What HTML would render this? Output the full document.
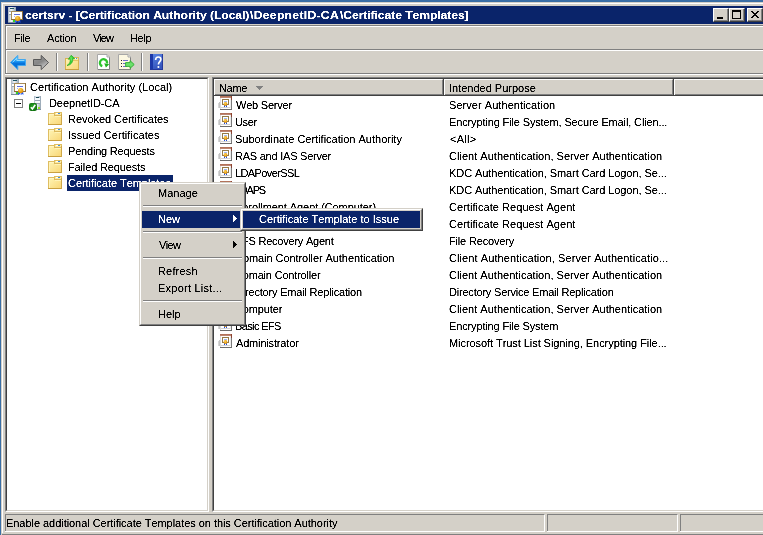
<!DOCTYPE html>
<html><head><meta charset="utf-8"><title>certsrv</title>
<style>
html,body{margin:0;padding:0;}
body{width:763px;height:535px;overflow:hidden;background:#3a6ea5;position:relative;font-family:"Liberation Sans",sans-serif;font-size:11px;color:#000;font-variant-ligatures:none;font-feature-settings:"liga" 0,"clig" 0;font-kerning:none;text-rendering:optimizeSpeed;}
div,span,svg{position:absolute;box-sizing:border-box;}
.t{white-space:nowrap;line-height:13px;height:13px;filter:url(#crisp);}
.face{background:#d4d0c8;}
svg{overflow:visible;}
</style></head>
<body>
<svg width="0" height="0" style="left:0;top:0"><defs>
<filter id="crisp" x="0" y="0" width="1" height="1" color-interpolation-filters="sRGB"><feComponentTransfer><feFuncA type="table" tableValues="0 0 0.45 0.95 1 1"/></feComponentTransfer></filter>
<linearGradient id="gFold" x1="0" y1="0" x2="1" y2="1"><stop offset="0" stop-color="#fef4b4"/><stop offset="1" stop-color="#f9d778"/></linearGradient>
<linearGradient id="gTower" x1="0" y1="0" x2="1" y2="0"><stop offset="0" stop-color="#a9b6c4"/><stop offset="0.4" stop-color="#f1f6f9"/><stop offset="1" stop-color="#93a3b2"/></linearGradient>
<linearGradient id="gBar" x1="0" y1="0" x2="0" y2="1"><stop offset="0" stop-color="#ac6850"/><stop offset="1" stop-color="#c4907c"/></linearGradient>
<radialGradient id="gSeal" cx="0.4" cy="0.35" r="0.7"><stop offset="0" stop-color="#fbd45c"/><stop offset="0.5" stop-color="#eda81c"/><stop offset="1" stop-color="#d88a08"/></radialGradient>
<linearGradient id="gBlueArr" x1="0" y1="0" x2="0" y2="1"><stop offset="0" stop-color="#5cc8ff"/><stop offset="0.45" stop-color="#1a94f2"/><stop offset="0.55" stop-color="#0674dc"/><stop offset="1" stop-color="#0a6cd0"/></linearGradient>
<linearGradient id="gGrayArr" x1="0" y1="0" x2="0.6" y2="1"><stop offset="0" stop-color="#9a9a9a"/><stop offset="0.55" stop-color="#868686"/><stop offset="1" stop-color="#d0d0d0"/></linearGradient>
<linearGradient id="gHelp" x1="0" y1="0" x2="0.4" y2="1"><stop offset="0" stop-color="#5a86e4"/><stop offset="1" stop-color="#3454bc"/></linearGradient>
<radialGradient id="gBadge" cx="0.5" cy="0.45" r="0.6"><stop offset="0" stop-color="#2cab2c"/><stop offset="1" stop-color="#0c6c0c"/></radialGradient>

<g id="folder" shape-rendering="crispEdges">
 <rect x="1" y="2" width="14" height="12" fill="#dfbe62"/>
 <rect x="7" y="1" width="8" height="4" fill="#dfbe62"/>
 <rect x="2" y="3" width="12" height="10" fill="url(#gFold)"/>
 <rect x="2" y="3" width="5" height="1" fill="#fff6c4"/>
 <rect x="2" y="3" width="1" height="10" fill="#fff3b8"/>
 <rect x="7" y="3" width="1" height="2" fill="#dcb85c"/>
 <rect x="7" y="4" width="7" height="1" fill="#dcb85c"/>
 <rect x="8" y="2" width="6" height="2" fill="#fbeaa4"/>
 <rect x="9" y="2" width="2" height="1" fill="#ffffff"/>
 <rect x="11" y="2" width="2" height="1" fill="#3c8ce4"/>
 <rect x="8" y="5" width="6" height="1" fill="#fff3b8"/>
 <rect x="1" y="13" width="14" height="1" fill="#c9a040"/>
 <rect x="14" y="3" width="1" height="11" fill="#cfa848"/>
</g>

<g id="tplicon">
 <g shape-rendering="crispEdges">
 <rect x="2" y="8" width="2" height="5" fill="#d6d6d6"/>
 <rect x="3" y="7" width="1" height="6" fill="#c4c4c4"/>
 <rect x="4" y="1" width="12" height="2" fill="url(#gBar)"/>
 <rect x="15" y="1" width="1" height="4" fill="#8c4432"/>
 <rect x="4" y="3" width="11" height="11" fill="#ffffff"/>
 <rect x="4" y="3" width="1" height="11" fill="#dcdcdc"/>
 <rect x="15" y="5" width="1" height="10" fill="#7a7a7a"/>
 <rect x="4" y="14" width="12" height="1" fill="#6c6c6c"/>
 <rect x="5" y="12" width="10" height="1" fill="#d2d2d2"/>
 <rect x="14" y="3" width="1" height="10" fill="#ececec"/>
 <rect x="6" y="4" width="7" height="6" fill="#947a48"/>
 <rect x="7" y="5" width="5" height="4" fill="#ffffff"/>
 <rect x="8" y="6" width="3" height="1" fill="#9cb8f6"/>
 <rect x="8" y="10" width="1" height="2" fill="#1c4cdc"/>
 <rect x="10" y="10" width="1" height="2" fill="#1c4cdc"/>
 </g>
 <circle cx="9.5" cy="9" r="1.9" fill="url(#gSeal)"/>
</g>

<g id="caicon">
 <g shape-rendering="crispEdges">
 <rect x="1" y="0" width="8" height="16" fill="url(#gTower)"/>
 <rect x="1" y="15" width="8" height="1" fill="#7c8c9c"/>
 <rect x="3" y="1" width="4" height="1" fill="#1c5464"/>
 <rect x="2" y="4" width="6" height="1" fill="#9aa8b6"/>
 <rect x="2" y="5" width="3" height="2" fill="#ffffff"/>
 <rect x="2" y="7" width="6" height="1" fill="#9aa8b6"/>
 <rect x="6" y="13" width="2" height="2" fill="#34d424"/>
 <rect x="4" y="4" width="12" height="9" fill="#8c6c38"/>
 <rect x="4" y="4" width="11" height="1" fill="#a88c58"/>
 <rect x="4" y="4" width="1" height="8" fill="#a88c58"/>
 <rect x="5" y="5" width="10" height="7" fill="#ffffff"/>
 <rect x="7" y="7" width="6" height="1" fill="#5c6cdc"/>
 <rect x="7" y="9" width="1" height="1" fill="#a4b0ec"/>
 </g>
 <path d="M8.3 12.5 L8 16 L9.2 15.1 L10.3 16 L10.3 12.5Z" fill="#2458f4"/>
 <path d="M11.2 12.5 L11.2 16 L12.3 15.1 L13.5 16 L13.1 12.5Z" fill="#2458f4"/>
 <circle cx="10.7" cy="11.6" r="2.7" fill="url(#gSeal)"/>
</g>

<g id="srvicon">
 <g shape-rendering="crispEdges">
 <rect x="6" y="1" width="7" height="14" fill="url(#gTower)"/>
 <rect x="6" y="14" width="7" height="1" fill="#8090a0"/>
 <rect x="8" y="2" width="3" height="1" fill="#1c4858"/>
 <rect x="7" y="3" width="5" height="2" fill="#f6fafc"/>
 <rect x="7" y="5" width="5" height="1" fill="#98a6b4"/>
 <rect x="7" y="6" width="5" height="2" fill="#f6fafc"/>
 <rect x="7" y="8" width="5" height="1" fill="#98a6b4"/>
 <rect x="10" y="12" width="2" height="2" fill="#8cdc24"/>
 </g>
 <rect x="1" y="8" width="8" height="8" rx="2.2" fill="url(#gBadge)"/>
 <path d="M2.8 12.2 L4.4 14 L7.3 9.8" fill="none" stroke="#fff" stroke-width="1.5"/>
</g>
</defs></svg>

<div style="left:1px;top:2px;width:770px;height:533px;background:#d4d0c8;"></div>
<div style="left:2px;top:3px;width:770px;height:1px;background:#fff;"></div>
<div style="left:2px;top:3px;width:1px;height:530px;background:#fff;"></div>
<div style="left:2px;top:534px;width:770px;height:1px;background:#808080;"></div>
<div style="left:5px;top:6px;width:758px;height:18px;background:#0a246a;"></div>
<span class="t" style="left:25px;top:9px;letter-spacing:-0.073px;color:#fff;font-weight:bold;transform-origin:0 0;transform:scaleX(1.109);">certsrv - [Certification Authority (Local)</span>
<span class="t" style="left:250px;top:9px;letter-spacing:0.250px;color:#fff;font-weight:bold;transform-origin:0 0;transform:scaleX(1.109);">\DeepnetID-CA</span>
<span class="t" style="left:340px;top:9px;letter-spacing:-0.091px;color:#fff;font-weight:bold;transform-origin:0 0;transform:scaleX(1.109);">\Certificate Templates]</span>
<svg id="ticon" style="left:7px;top:7px" width="16" height="16" viewBox="0 0 16 16"><use href="#caicon"/></svg>
<div style="left:713px;top:8px;width:16px;height:14px;background:#d4d0c8;border-top:1px solid #fff;border-left:1px solid #fff;border-right:1px solid #404040;border-bottom:1px solid #404040;"><div style="left:0;top:0;width:14px;height:12px;border-right:1px solid #808080;border-bottom:1px solid #808080;"></div><div style="left:3px;top:8px;width:6px;height:2px;background:#000"></div></div>
<div style="left:729px;top:8px;width:16px;height:14px;background:#d4d0c8;border-top:1px solid #fff;border-left:1px solid #fff;border-right:1px solid #404040;border-bottom:1px solid #404040;"><div style="left:0;top:0;width:14px;height:12px;border-right:1px solid #808080;border-bottom:1px solid #808080;"></div><div style="left:2px;top:1px;width:9px;height:9px;border:1px solid #000;border-top-width:2px;"></div></div>
<div style="left:747px;top:8px;width:16px;height:14px;background:#d4d0c8;border-top:1px solid #fff;border-left:1px solid #fff;border-right:1px solid #404040;border-bottom:1px solid #404040;"><div style="left:0;top:0;width:14px;height:12px;border-right:1px solid #808080;border-bottom:1px solid #808080;"></div><svg style="left:3px;top:2px" width="8" height="7" viewBox="0 0 8 7" shape-rendering="crispEdges"><path d="M0 0h2v1h-2zM6 0h2v1h-2zM1 1h2v1h-2zM5 1h2v1h-2zM2 2h4v1h-4zM3 3h2v1h-2zM2 4h4v1h-4zM1 5h2v1h-2zM5 5h2v1h-2zM0 6h2v1h-2zM6 6h2v1h-2z" fill="#000"/></svg></div>
<div style="left:5px;top:25px;width:760px;height:1px;background:#808080;"></div>
<div style="left:5px;top:26px;width:760px;height:1px;background:#fff;"></div>
<div style="left:5px;top:25px;width:1px;height:50px;background:#808080;"></div>
<div style="left:6px;top:26px;width:1px;height:48px;background:#fff;"></div>
<div style="left:5px;top:49px;width:760px;height:1px;background:#808080;"></div>
<div style="left:6px;top:50px;width:760px;height:1px;background:#fff;"></div>
<div style="left:5px;top:73px;width:760px;height:1px;background:#808080;"></div>
<div style="left:5px;top:74px;width:760px;height:1px;background:#fff;"></div>
<span class="t" style="left:14px;top:32px;letter-spacing:-0.333px;">File</span>
<span class="t" style="left:47px;top:32px;letter-spacing:-0.200px;">Action</span>
<span class="t" style="left:93px;top:32px;letter-spacing:-1.000px;">View</span>
<span class="t" style="left:130px;top:32px;letter-spacing:-0.333px;">Help</span>
<div style="left:56px;top:53px;width:1px;height:18px;background:#808080;"></div>
<div style="left:57px;top:53px;width:1px;height:18px;background:#fff;"></div>
<div style="left:87px;top:53px;width:1px;height:18px;background:#808080;"></div>
<div style="left:88px;top:53px;width:1px;height:18px;background:#fff;"></div>
<div style="left:141px;top:53px;width:1px;height:18px;background:#808080;"></div>
<div style="left:142px;top:53px;width:1px;height:18px;background:#fff;"></div>
<svg style="left:10px;top:54px" width="16" height="16" viewBox="0 0 16 16"><path d="M0.5 8.5 L7.8 1.4 L7.8 5.5 L15.5 5.5 L15.5 11.5 L7.8 11.5 L7.8 15.6 Z" fill="url(#gBlueArr)" stroke="#44a8ee" stroke-width="1" stroke-linejoin="round"/><path d="M2.6 8.3 L6.8 4.2 L6.8 6.5 L14.4 6.5" fill="none" stroke="#a0e4ff" stroke-width="1" opacity="0.85"/></svg>
<svg style="left:33px;top:54px" width="16" height="16" viewBox="0 0 16 16"><path d="M15.5 8.5 L8.2 1.4 L8.2 5.5 L0.5 5.5 L0.5 11.5 L8.2 11.5 L8.2 15.6 Z" fill="url(#gGrayArr)" stroke="#585858" stroke-width="1" stroke-linejoin="round"/></svg>
<svg style="left:64px;top:54px" width="16" height="16" viewBox="0 0 16 16">
 <g shape-rendering="crispEdges">
 <rect x="1" y="4" width="14" height="12" fill="#d8b250"/>
 <rect x="9" y="3" width="6" height="3" fill="#dcb85c"/>
 <rect x="2" y="5" width="12" height="10" fill="url(#gFold)"/>
 <rect x="9" y="6" width="5" height="1" fill="#e6c468"/>
 <rect x="10" y="4" width="4" height="2" fill="#fbeaa4"/>
 <rect x="10" y="4" width="2" height="1" fill="#fff"/>
 <rect x="12" y="4" width="1" height="1" fill="#3c8ce4"/>
 <rect x="1" y="15" width="14" height="1" fill="#c9a040"/>
 </g>
 <path d="M3 11.5 C5.4 10.2 6.6 8 6.2 5 L4.3 5.3 L7.2 1.3 L10.8 4.6 L8.7 4.9 C9 8.4 6.8 11 3 11.5Z" fill="#3cd43c" stroke="#22a822" stroke-width="0.7"/><path d="M6.9 2.8 L7.4 6.5" stroke="#7cf07c" stroke-width="0.9" fill="none"/>
</svg>
<svg style="left:95px;top:54px" width="16" height="16" viewBox="0 0 16 16">
 <path d="M2.5 0.5 L12 0.5 L14.5 3 L14.5 15.5 L2.5 15.5Z" fill="#fff" stroke="#a8a8a8" stroke-width="1"/>
 <path d="M3 15.5 L14.5 15.5 L14.5 3.5" fill="none" stroke="#808080" stroke-width="1"/>
 <path d="M12 0.5 L12 3 L14.5 3" fill="#e8e8e8" stroke="#a8a8a8" stroke-width="1"/>
 <path d="M7.3 12.2 A3.6 3.6 0 1 1 12 9.6" fill="none" stroke="#2cc42c" stroke-width="2.3"/>
 <path d="M9.2 9.2 L14.3 10.2 L10.9 13.4Z" fill="#1eb41e"/>
</svg>
<svg style="left:118px;top:54px" width="16" height="16" viewBox="0 0 16 16">
 <path d="M0.5 0.5 L10 0.5 L12.5 3 L12.5 15.5 L0.5 15.5Z" fill="#fdf8e2" stroke="#a8a8a8" stroke-width="1"/>
 <path d="M1 15.5 L12.5 15.5 L12.5 3.5" fill="none" stroke="#808080" stroke-width="1"/>
 <path d="M10 0.5 L10 3 L12.5 3" fill="#f0f0f0" stroke="#a8a8a8" stroke-width="1"/>
 <g shape-rendering="crispEdges">
 <rect x="3" y="6" width="1" height="1" fill="#202020"/><rect x="3" y="9" width="1" height="1" fill="#202020"/><rect x="3" y="12" width="1" height="1" fill="#202020"/>
 <rect x="5" y="6" width="5" height="1" fill="#6c6ccc"/><rect x="5" y="9" width="4" height="1" fill="#6c6ccc"/><rect x="5" y="12" width="4" height="1" fill="#6c6ccc"/>
 </g>
 <path d="M7.6 8.6 L12 8.6 L12 6.6 L16.2 10.5 L12 14.4 L12 12.4 L7.6 12.4Z" fill="#6ce06c" stroke="#2cac2c" stroke-width="0.9"/>
</svg>
<svg style="left:150px;top:54px" width="13" height="16" viewBox="0 0 13 16">
 <rect x="0" y="0" width="13" height="16" fill="url(#gHelp)" shape-rendering="crispEdges"/>
 <rect x="0" y="0" width="3" height="16" fill="#1c38a8" shape-rendering="crispEdges"/>
 <rect x="12" y="0" width="1" height="16" fill="#24389c" shape-rendering="crispEdges"/>
 <rect x="0" y="15" width="13" height="1" fill="#24389c" shape-rendering="crispEdges"/>
 <path d="M5.6 6 C5.6 3.6 7 3 8.3 3 C9.8 3 10.9 3.9 10.9 5.3 C10.9 7.6 8.4 7.6 8.4 10.4" fill="none" stroke="#fff" stroke-width="1.6"/>
 <circle cx="8.4" cy="13" r="1.05" fill="#fff"/>
</svg>

<div style="left:5px;top:77px;width:204px;height:435px;background:#fff;border-top:1px solid #808080;border-left:1px solid #808080;border-right:1px solid #fff;border-bottom:1px solid #fff;"></div>
<div style="left:6px;top:78px;width:202px;height:433px;background:#fff;border-top:1px solid #404040;border-left:1px solid #404040;border-right:1px solid #d4d0c8;border-bottom:1px solid #d4d0c8;"></div>
<div style="left:212px;top:77px;width:560px;height:435px;background:#fff;border-top:1px solid #808080;border-left:1px solid #808080;border-bottom:1px solid #fff;"></div>
<div style="left:213px;top:78px;width:560px;height:433px;background:#fff;border-top:1px solid #404040;border-left:1px solid #404040;border-bottom:1px solid #d4d0c8;"></div>
<div style="left:214px;top:79px;width:230px;height:17px;background:#d4d0c8;"></div><div style="left:214px;top:79px;width:228px;height:1px;background:#fff;"></div><div style="left:214px;top:79px;width:1px;height:16px;background:#fff;"></div><div style="left:442px;top:80px;width:1px;height:15px;background:#808080;"></div><div style="left:215px;top:94px;width:228px;height:1px;background:#808080;"></div><div style="left:443px;top:79px;width:1px;height:17px;background:#404040;"></div><div style="left:214px;top:95px;width:230px;height:1px;background:#404040;"></div>
<div style="left:444px;top:79px;width:230px;height:17px;background:#d4d0c8;"></div><div style="left:444px;top:79px;width:228px;height:1px;background:#fff;"></div><div style="left:444px;top:79px;width:1px;height:16px;background:#fff;"></div><div style="left:672px;top:80px;width:1px;height:15px;background:#808080;"></div><div style="left:445px;top:94px;width:228px;height:1px;background:#808080;"></div><div style="left:673px;top:79px;width:1px;height:17px;background:#404040;"></div><div style="left:444px;top:95px;width:230px;height:1px;background:#404040;"></div>
<div style="left:674px;top:79px;width:100px;height:17px;background:#d4d0c8;"></div><div style="left:674px;top:79px;width:98px;height:1px;background:#fff;"></div><div style="left:674px;top:79px;width:1px;height:16px;background:#fff;"></div><div style="left:772px;top:80px;width:1px;height:15px;background:#808080;"></div><div style="left:675px;top:94px;width:98px;height:1px;background:#808080;"></div><div style="left:773px;top:79px;width:1px;height:17px;background:#404040;"></div><div style="left:674px;top:95px;width:100px;height:1px;background:#404040;"></div>
<span class="t" style="left:219px;top:82px;letter-spacing:-0.333px;">Name</span>
<span class="t" style="left:449px;top:82px;">Intended Purpose</span>
<svg style="left:256px;top:86px" width="7" height="4" viewBox="0 0 7 4" shape-rendering="crispEdges"><path d="M0 0h7v1h-7zM1 1h5v1h-5zM2 2h3v1h-3zM3 3h1v1h-1z" fill="#808080"/></svg>
<svg style="left:216px;top:95px" width="16" height="16" viewBox="0 0 16 16"><use href="#tplicon"/></svg>
<span class="t" style="left:236px;top:99px;letter-spacing:-0.222px;">Web Server</span>
<span class="t" style="left:449px;top:99px;letter-spacing:0.050px;">Server Authentication</span>
<svg style="left:216px;top:112px" width="16" height="16" viewBox="0 0 16 16"><use href="#tplicon"/></svg>
<span class="t" style="left:235px;top:116px;letter-spacing:-0.333px;">User</span>
<span class="t" style="left:449px;top:116px;letter-spacing:-0.133px;">Encrypting File System, Secure Email, Clien...</span>
<svg style="left:216px;top:129px" width="16" height="16" viewBox="0 0 16 16"><use href="#tplicon"/></svg>
<span class="t" style="left:235px;top:133px;">Subordinate Certification Authority</span>
<span class="t" style="left:450px;top:133px;letter-spacing:0.250px;">&lt;All&gt;</span>
<svg style="left:216px;top:146px" width="16" height="16" viewBox="0 0 16 16"><use href="#tplicon"/></svg>
<span class="t" style="left:235px;top:150px;letter-spacing:-0.235px;">RAS and IAS Server</span>
<span class="t" style="left:449px;top:150px;letter-spacing:0.023px;">Client Authentication, Server Authentication</span>
<svg style="left:216px;top:163px" width="16" height="16" viewBox="0 0 16 16"><use href="#tplicon"/></svg>
<span class="t" style="left:235px;top:167px;letter-spacing:-0.600px;">LDAPoverSSL</span>
<span class="t" style="left:449px;top:167px;letter-spacing:-0.071px;">KDC Authentication, Smart Card Logon, Se...</span>
<svg style="left:216px;top:180px" width="16" height="16" viewBox="0 0 16 16"><use href="#tplicon"/></svg>
<span class="t" style="left:235px;top:184px;letter-spacing:-1.250px;">LDAPS</span>
<span class="t" style="left:449px;top:184px;letter-spacing:-0.071px;">KDC Authentication, Smart Card Logon, Se...</span>
<svg style="left:216px;top:197px" width="16" height="16" viewBox="0 0 16 16"><use href="#tplicon"/></svg>
<span class="t" style="left:235px;top:201px;letter-spacing:-0.077px;">Enrollment Agent (Computer)</span>
<span class="t" style="left:449px;top:201px;letter-spacing:0.042px;">Certificate Request Agent</span>
<svg style="left:216px;top:214px" width="16" height="16" viewBox="0 0 16 16"><use href="#tplicon"/></svg>
<span class="t" style="left:235px;top:218px;">Enrollment Agent</span>
<span class="t" style="left:449px;top:218px;letter-spacing:0.042px;">Certificate Request Agent</span>
<svg style="left:216px;top:231px" width="16" height="16" viewBox="0 0 16 16"><use href="#tplicon"/></svg>
<span class="t" style="left:235px;top:235px;letter-spacing:-0.235px;">EFS Recovery Agent</span>
<span class="t" style="left:449px;top:235px;letter-spacing:-0.167px;">File Recovery</span>
<svg style="left:216px;top:248px" width="16" height="16" viewBox="0 0 16 16"><use href="#tplicon"/></svg>
<span class="t" style="left:235px;top:252px;letter-spacing:-0.065px;">Domain Controller Authentication</span>
<span class="t" style="left:449px;top:252px;letter-spacing:0.089px;">Client Authentication, Server Authenticatio...</span>
<svg style="left:216px;top:265px" width="16" height="16" viewBox="0 0 16 16"><use href="#tplicon"/></svg>
<span class="t" style="left:235px;top:269px;letter-spacing:-0.188px;">Domain Controller</span>
<span class="t" style="left:449px;top:269px;letter-spacing:0.023px;">Client Authentication, Server Authentication</span>
<svg style="left:216px;top:282px" width="16" height="16" viewBox="0 0 16 16"><use href="#tplicon"/></svg>
<span class="t" style="left:235px;top:286px;letter-spacing:-0.192px;">Directory Email Replication</span>
<span class="t" style="left:449px;top:286px;letter-spacing:-0.206px;">Directory Service Email Replication</span>
<svg style="left:216px;top:299px" width="16" height="16" viewBox="0 0 16 16"><use href="#tplicon"/></svg>
<span class="t" style="left:235px;top:303px;letter-spacing:-0.143px;">Computer</span>
<span class="t" style="left:449px;top:303px;letter-spacing:0.023px;">Client Authentication, Server Authentication</span>
<svg style="left:216px;top:316px" width="16" height="16" viewBox="0 0 16 16"><use href="#tplicon"/></svg>
<span class="t" style="left:235px;top:320px;letter-spacing:-0.625px;">Basic EFS</span>
<span class="t" style="left:449px;top:320px;letter-spacing:-0.143px;">Encrypting File System</span>
<svg style="left:216px;top:333px" width="16" height="16" viewBox="0 0 16 16"><use href="#tplicon"/></svg>
<span class="t" style="left:236px;top:337px;letter-spacing:-0.167px;">Administrator</span>
<span class="t" style="left:449px;top:337px;letter-spacing:-0.064px;">Microsoft Trust List Signing, Encrypting File...</span>
<span class="t" style="left:30px;top:81px;letter-spacing:0.033px;">Certification Authority (Local)</span>
<span class="t" style="left:49px;top:97px;letter-spacing:-0.091px;">DeepnetID-CA</span>
<span class="t" style="left:68px;top:113px;letter-spacing:-0.053px;">Revoked Certificates</span>
<svg style="left:47px;top:111px" width="16" height="16" viewBox="0 0 16 16"><use href="#folder"/></svg>
<span class="t" style="left:68px;top:129px;letter-spacing:0.056px;">Issued Certificates</span>
<svg style="left:47px;top:127px" width="16" height="16" viewBox="0 0 16 16"><use href="#folder"/></svg>
<span class="t" style="left:68px;top:145px;letter-spacing:-0.200px;">Pending Requests</span>
<svg style="left:47px;top:143px" width="16" height="16" viewBox="0 0 16 16"><use href="#folder"/></svg>
<span class="t" style="left:68px;top:161px;letter-spacing:-0.143px;">Failed Requests</span>
<svg style="left:47px;top:159px" width="16" height="16" viewBox="0 0 16 16"><use href="#folder"/></svg>
<div style="left:67px;top:175px;width:106px;height:16px;background:#0a246a;"></div>
<span class="t" style="left:68px;top:177px;letter-spacing:-0.050px;color:#fff;">Certificate Templates</span>
<svg style="left:47px;top:175px" width="16" height="16" viewBox="0 0 16 16"><use href="#folder"/></svg>
<svg style="left:10px;top:79px" width="16" height="16" viewBox="0 0 16 16"><use href="#caicon"/></svg>
<svg style="left:28px;top:95px" width="16" height="16" viewBox="0 0 16 16"><use href="#srvicon"/></svg>
<div style="left:14px;top:99px;width:9px;height:9px;background:#fff;border:1px solid #808080;"></div>
<div style="left:16px;top:103px;width:5px;height:1px;background:#000;"></div>
<div style="left:5px;top:514px;width:540px;height:18px;background:#d4d0c8;border-top:1px solid #808080;border-right:1px solid #fff;border-bottom:1px solid #fff;"></div><div style="left:5px;top:514px;width:1px;height:17px;background:#808080;"></div>
<div style="left:547px;top:514px;width:131px;height:18px;background:#d4d0c8;border-top:1px solid #808080;border-right:1px solid #fff;border-bottom:1px solid #fff;"></div><div style="left:547px;top:514px;width:1px;height:17px;background:#808080;"></div>
<div style="left:680px;top:514px;width:100px;height:18px;background:#d4d0c8;border-top:1px solid #808080;border-right:1px solid #fff;border-bottom:1px solid #fff;"></div><div style="left:680px;top:514px;width:1px;height:17px;background:#808080;"></div>
<span class="t" style="left:6px;top:517px;letter-spacing:-0.043px;">Enable additional Certificate Templates on this Certification Authority</span>
<div style="left:139px;top:182px;width:107px;height:144px;background:#d4d0c8;border-top:1px solid #d4d0c8;border-left:1px solid #d4d0c8;border-right:1px solid #404040;border-bottom:1px solid #404040;"><div style="left:0;top:0;width:105px;height:142px;border-top:1px solid #fff;border-left:1px solid #fff;border-right:1px solid #808080;border-bottom:1px solid #808080;"></div></div>
<div style="left:143px;top:205px;width:99px;height:1px;background:#808080;"></div>
<div style="left:143px;top:206px;width:99px;height:1px;background:#fff;"></div>
<div style="left:143px;top:231px;width:99px;height:1px;background:#808080;"></div>
<div style="left:143px;top:232px;width:99px;height:1px;background:#fff;"></div>
<div style="left:143px;top:257px;width:99px;height:1px;background:#808080;"></div>
<div style="left:143px;top:258px;width:99px;height:1px;background:#fff;"></div>
<div style="left:143px;top:300px;width:99px;height:1px;background:#808080;"></div>
<div style="left:143px;top:301px;width:99px;height:1px;background:#fff;"></div>
<div style="left:142px;top:211px;width:101px;height:17px;background:#0a246a;"></div>
<span class="t" style="left:158px;top:187px;color:#000;">Manage</span>
<span class="t" style="left:158px;top:213px;color:#fff;">New</span>
<span class="t" style="left:159px;top:239px;letter-spacing:-0.667px;color:#000;">View</span>
<span class="t" style="left:158px;top:265px;letter-spacing:0.167px;color:#000;">Refresh</span>
<span class="t" style="left:158px;top:282px;letter-spacing:0.231px;color:#000;">Export List...</span>
<span class="t" style="left:158px;top:308px;color:#000;">Help</span>
<svg style="left:233px;top:215px" width="4" height="7" viewBox="0 0 4 7" shape-rendering="crispEdges"><path d="M0 0h1v7h-1zM1 1h1v5h-1zM2 2h1v3h-1zM3 3h1v1h-1z" fill="#fff"/></svg>
<svg style="left:233px;top:241px" width="4" height="7" viewBox="0 0 4 7" shape-rendering="crispEdges"><path d="M0 0h1v7h-1zM1 1h1v5h-1zM2 2h1v3h-1zM3 3h1v1h-1z" fill="#000"/></svg>
<div style="left:240px;top:208px;width:183px;height:23px;background:#d4d0c8;border-top:1px solid #d4d0c8;border-left:1px solid #d4d0c8;border-right:1px solid #404040;border-bottom:1px solid #404040;"><div style="left:0;top:0;width:181px;height:21px;border-top:1px solid #fff;border-left:1px solid #fff;border-right:1px solid #808080;border-bottom:1px solid #808080;"></div></div>
<div style="left:243px;top:211px;width:177px;height:17px;background:#0a246a;"></div>
<span class="t" style="left:259px;top:213px;color:#fff;">Certificate Template to Issue</span>
</body></html>
